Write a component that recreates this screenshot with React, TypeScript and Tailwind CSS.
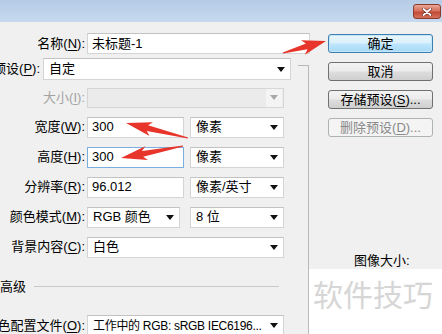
import React from 'react'

const font = { fontFamily: '"Liberation Sans", "Noto Sans CJK SC", sans-serif' }

// 带下划线的快捷键字母
function Key({ k }: { k: string }) {
  return <span className="underline underline-offset-2">{k}</span>
}

function Label({ w, children, disabled }: { w: string; children: React.ReactNode; disabled?: boolean }) {
  return (
    <div className={`${w} shrink-0 flex justify-end items-center whitespace-nowrap text-[13px] ${disabled ? 'text-[#a3a3a3]' : 'text-black'}`}>
      {children}
    </div>
  )
}

function Tri({ gray }: { gray?: boolean }) {
  return (
    <svg width="8" height="5" viewBox="0 0 8 5" className="shrink-0">
      <polygon points="0,0 8,0 4,5" fill={gray ? '#a8a8a8' : '#111'} />
    </svg>
  )
}

function TextBox({ w, value, focused }: { w: string; value: string; focused?: boolean }) {
  return (
    <div
      className={`${w} h-full bg-white border flex items-center pl-[4px] text-[13px] text-black whitespace-nowrap ${
        focused ? 'border-[#7aaedc]' : 'border-[#d4d4d4] border-t-[#c2c2c2]'
      }`}
    >
      {value}
    </div>
  )
}

function Select({ w, value, disabled, small }: { w: string; value?: string; disabled?: boolean; small?: boolean }) {
  return (
    <div
      className={`${w} h-full border flex items-center whitespace-nowrap ${small ? 'text-[12px] tracking-[-0.3px]' : 'text-[13px]'} ${
        disabled ? 'bg-[#ebebeb] border-[#d6d6d6]' : 'bg-white border-[#d4d4d4] border-t-[#c2c2c2]'
      }`}
    >
      <div className="flex-1 pl-[5px] overflow-hidden text-black">{value}</div>
      <div className={`w-[16px] h-full flex items-center justify-center mr-[1px] ${disabled ? 'bg-[#f4f4f4]' : ''}`}>
        <Tri gray={disabled} />
      </div>
    </div>
  )
}

function Btn({ children, primary, disabled }: { children: React.ReactNode; primary?: boolean; disabled?: boolean }) {
  let cls = 'border-[#707070] bg-[linear-gradient(#f3f3f3_0%,#ebebeb_48%,#dddddd_52%,#cfcfcf_100%)] text-black'
  if (primary)
    cls = 'border-[#3c7fb1] bg-[linear-gradient(#eaf6fd_0%,#d9f0fc_48%,#bee6fd_52%,#a7d9f5_100%)] shadow-[inset_0_0_0_1px_#c5e6f7] text-black'
  if (disabled) cls = 'border-[#adb2b5] bg-[#f4f4f4] text-[#8a8a8a]'
  return (
    <div className={`ml-[19px] w-[105px] h-[19px] rounded-[3px] border flex items-center justify-center text-[13px] leading-none ${cls}`}>
      {children}
    </div>
  )
}

function arrow(x1: number, y1: number, x2: number, y2: number, head = 20, headW = 14, shaft = 6) {
  const len = Math.hypot(x2 - x1, y2 - y1)
  const ux = (x2 - x1) / len
  const uy = (y2 - y1) / len
  const nx = -uy
  const ny = ux
  const bx = x2 - ux * head
  const by = y2 - uy * head
  const p = (x: number, y: number) => `${x.toFixed(1)},${y.toFixed(1)}`
  return [
    p(x1 + nx * 0.6, y1 + ny * 0.6),
    p(bx + nx * shaft / 2, by + ny * shaft / 2),
    p(bx - ux * 4 + nx * headW / 2, by - uy * 4 + ny * headW / 2),
    p(x2, y2),
    p(bx - ux * 4 - nx * headW / 2, by - uy * 4 - ny * headW / 2),
    p(bx - nx * shaft / 2, by - ny * shaft / 2),
    p(x1 - nx * 0.6, y1 - ny * 0.6),
  ].join(' ')
}

export default function App() {
  return (
    <div className="w-[442px] h-[334px] overflow-hidden relative bg-[#f0f0f0] flex flex-col" style={font}>
      {/* 标题栏 */}
      <div className="h-[22px] shrink-0 bg-[linear-gradient(#b6cce6,#c6d9ee)] flex justify-end items-start pt-[4px] pr-[1px]">
        <div className="w-[28px] h-[15px] rounded-[3px] border border-[#8d3a2e] bg-[linear-gradient(#eaa796_0%,#d6705c_45%,#c24a35_55%,#d3705a_100%)] flex items-center justify-center">
          <svg width="10" height="8" viewBox="0 0 10 8">
            <path d="M1.5 1 L8.5 7 M8.5 1 L1.5 7" stroke="#6b2a20" strokeWidth="3" strokeLinecap="round" />
            <path d="M1.5 1 L8.5 7 M8.5 1 L1.5 7" stroke="#fff" strokeWidth="1.8" strokeLinecap="round" />
          </svg>
        </div>
      </div>

      <div className="flex flex-1 min-h-0">
        {/* 左侧表单 */}
        <div className="w-[298px] shrink-0 flex flex-col">
          <div className="mt-[11px] h-[21px] flex">
            <Label w="w-[85px]">名称(<Key k="N" />):</Label>
            <div className="ml-[2px] w-[223px] h-full shrink-0">
              <TextBox w="w-full" value="未标题-1" />
            </div>
          </div>
          <div className="mt-[4px] h-[22px] flex">
            <Label w="w-[40px]">预设(<Key k="P" />):</Label>
            <div className="ml-[3px]">
              <div className="h-[22px] flex">
                <Select w="w-[248px]" value="自定" />
              </div>
            </div>
          </div>
          <div className="mt-[8px] h-[22px] flex">
            <Label w="w-[85px]" disabled>
              大小(<Key k="I" />):
            </Label>
            <div className="ml-[2px] flex">
              <Select w="w-[197px]" disabled />
            </div>
          </div>
          <div className="mt-[9px] h-[21px] flex">
            <Label w="w-[85px]">宽度(<Key k="W" />):</Label>
            <div className="ml-[2px] flex gap-[6px]">
              <TextBox w="w-[97px]" value="300" />
              <Select w="w-[94px]" value="像素" />
            </div>
          </div>
          <div className="mt-[9px] h-[21px] flex">
            <Label w="w-[85px]">高度(<Key k="H" />):</Label>
            <div className="ml-[2px] flex gap-[6px]">
              <TextBox w="w-[97px]" value="300" focused />
              <Select w="w-[94px]" value="像素" />
            </div>
          </div>
          <div className="mt-[9px] h-[21px] flex">
            <Label w="w-[85px]">分辨率(<Key k="R" />):</Label>
            <div className="ml-[2px] flex gap-[6px]">
              <TextBox w="w-[97px]" value="96.012" />
              <Select w="w-[94px]" value="像素/英寸" />
            </div>
          </div>
          <div className="mt-[9px] h-[21px] flex">
            <Label w="w-[85px]">颜色模式(<Key k="M" />):</Label>
            <div className="ml-[2px] flex gap-[10px]">
              <Select w="w-[93px]" value="RGB 颜色" />
              <Select w="w-[94px]" value="8 位" />
            </div>
          </div>
          <div className="mt-[9px] h-[21px] flex">
            <Label w="w-[85px]">背景内容(<Key k="C" />):</Label>
            <div className="ml-[2px] flex">
              <Select w="w-[197px]" value="白色" />
            </div>
          </div>
          <div className="mt-[22px] h-[14px] flex items-center">
            <span className="text-[13px] text-black whitespace-nowrap">高级</span>
            <div className="ml-[8px] w-[245px] h-px bg-[#c9c9c9]" />
          </div>
          <div className="mt-[21px] h-[22px] flex shrink-0">
            <Label w="w-[85px]">颜色配置文件(<Key k="O" />):</Label>
            <div className="ml-[2px] flex">
              <Select w="w-[197px]" value="工作中的 RGB: sRGB IEC6196..." small />
            </div>
          </div>
        </div>

        {/* 分组框右边线 */}
        <div className="w-[11px] shrink-0 pt-[43px]">
          <div className="h-full border-t border-r border-[#b9b9b9]" />
        </div>

        {/* 右侧按钮 */}
        <div className="flex-1 flex flex-col">
          <div className="mt-[12px]">
            <Btn primary>确定</Btn>
          </div>
          <div className="mt-[9px]">
            <Btn>取消</Btn>
          </div>
          <div className="mt-[9px]">
            <Btn>
              存储预设(<Key k="S" />)...
            </Btn>
          </div>
          <div className="mt-[9px]">
            <Btn disabled>
              删除预设(<Key k="D" />)...
            </Btn>
          </div>
          <div className="mt-[117px] h-[14px] pl-[45px] text-[13px] leading-[14px] text-black whitespace-nowrap">图像大小:</div>
          <div className="flex-1 mt-[1px] bg-white pl-[4px] pt-[9px]">
            <span className="text-[30px] leading-[36px] text-[#d6d6d6] whitespace-nowrap">软件技巧</span>
          </div>
        </div>
      </div>

      {/* 红色标注箭头 */}
      <svg className="absolute inset-0 pointer-events-none" width="442" height="334" viewBox="0 0 442 334">
        <polygon points={arrow(283, 53, 326, 41, 20, 15, 6)} fill="#e8352c" />
        <polygon points={arrow(188, 138, 126, 123, 22, 14, 6)} fill="#e8352c" />
        <polygon points={arrow(183, 146, 121, 158, 22, 14, 6)} fill="#e8352c" />
      </svg>
    </div>
  )
}
